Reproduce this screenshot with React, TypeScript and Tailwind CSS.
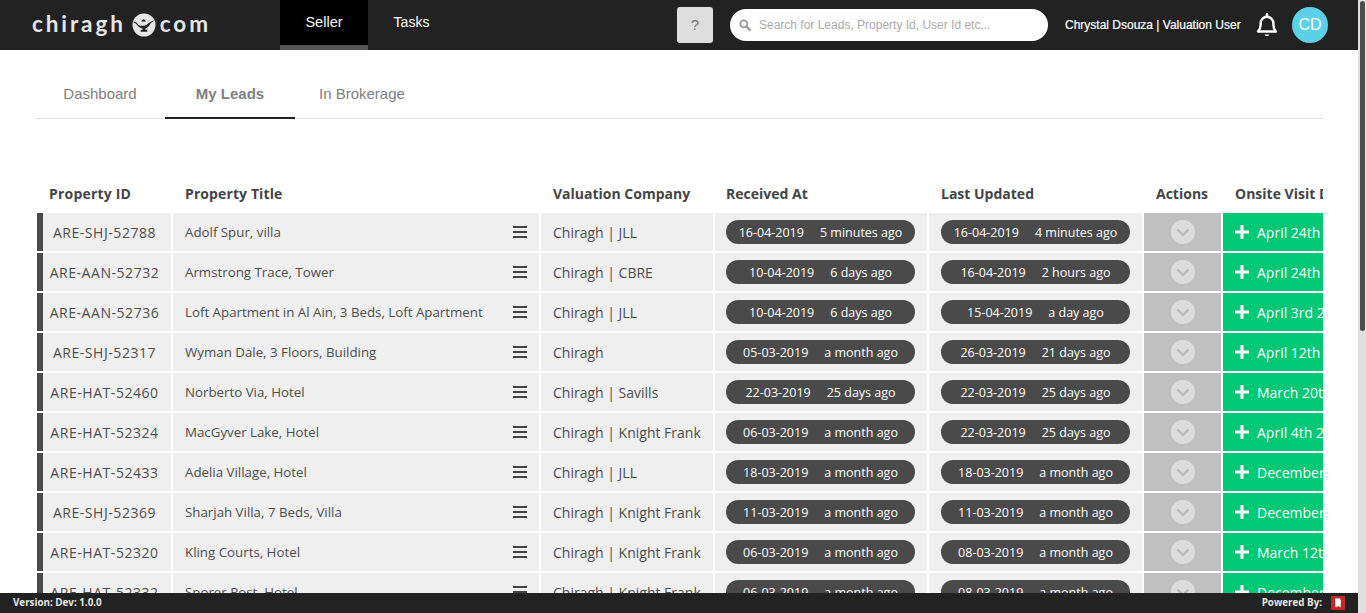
import React from "react";

const rows = [
  ["ARE-SHJ-52788", "Adolf Spur, villa", "Chiragh | JLL", "16-04-2019", "5 minutes ago", "16-04-2019", "4 minutes ago", "April 24th 2019"],
  ["ARE-AAN-52732", "Armstrong Trace, Tower", "Chiragh | CBRE", "10-04-2019", "6 days ago", "16-04-2019", "2 hours ago", "April 24th 2019"],
  ["ARE-AAN-52736", "Loft Apartment in Al Ain, 3 Beds, Loft Apartment", "Chiragh | JLL", "10-04-2019", "6 days ago", "15-04-2019", "a day ago", "April 3rd 2019"],
  ["ARE-SHJ-52317", "Wyman Dale, 3 Floors, Building", "Chiragh", "05-03-2019", "a month ago", "26-03-2019", "21 days ago", "April 12th 2019"],
  ["ARE-HAT-52460", "Norberto Via, Hotel", "Chiragh | Savills", "22-03-2019", "25 days ago", "22-03-2019", "25 days ago", "March 20th 2019"],
  ["ARE-HAT-52324", "MacGyver Lake, Hotel", "Chiragh | Knight Frank", "06-03-2019", "a month ago", "22-03-2019", "25 days ago", "April 4th 2019"],
  ["ARE-HAT-52433", "Adelia Village, Hotel", "Chiragh | JLL", "18-03-2019", "a month ago", "18-03-2019", "a month ago", "December 2018"],
  ["ARE-SHJ-52369", "Sharjah Villa, 7 Beds, Villa", "Chiragh | Knight Frank", "11-03-2019", "a month ago", "11-03-2019", "a month ago", "December 2018"],
  ["ARE-HAT-52320", "Kling Courts, Hotel", "Chiragh | Knight Frank", "06-03-2019", "a month ago", "08-03-2019", "a month ago", "March 12th 2019"],
  ["ARE-HAT-52332", "Sporer Post, Hotel", "Chiragh | Knight Frank", "06-03-2019", "a month ago", "08-03-2019", "a month ago", "December 2018"],
];

function Pill({ date, ago }: { date: string; ago: string }) {
  return (
    <div className="flex h-6 w-[189px] items-center justify-center gap-[16px] rounded-xl bg-[#4a4a4a] pt-[2px] text-[12.5px] text-white">
      <span>{date}</span>
      <span>{ago}</span>
    </div>
  );
}

function Lamp() {
  return (
    <svg width="24" height="24" viewBox="0 0 24 24" className="ml-[6px] mr-[4px] shrink-0">
      <circle cx="12" cy="12" r="11.5" fill="#e6e6e6" />
      <path d="M1.5 8.5c2 .2 3.2 1 4.2 2.400.8 1.200 2 1.800 3.400 1.900h3.400c1.600-.2 3.200-1.800 5-3.200 1.400-.9 3-1.600 5.200-2-1.800 1-3.300 1.800-4.200 3.200-1.300 2.200-3.200 4.200-5.200 4.800v1.200h2v2H8.700v-2h2v-1.200c-2.400-.5-4.200-1.700-5.600-3.600-.9-1.200-2-2-3.600-2.500z" fill="#222" />
      <path d="M9 8.600c.8-1.400 1.600-2 2.600-2.300.9.300 1.700.9 2.500 2.300z" fill="#222" />
    </svg>
  );
}

export default function App() {
  const th = "px-0 text-left align-middle font-bold";
  return (
    <div className="flex h-[613px] w-full overflow-hidden bg-white font-['Open_Sans',sans-serif]">
      <div className="flex h-full min-w-0 flex-1 flex-col">
        <header className="flex h-[50px] shrink-0 items-stretch bg-[#222222] font-['Liberation_Sans',Arial,sans-serif] text-white">
          <div className="flex w-[280px] shrink-0 items-center pb-[1px] pl-[32px] font-['Lato',sans-serif] text-[22.5px] font-bold leading-none tracking-[2.9px] text-[#e6e6e6]">
            <span>chiragh</span>
            <Lamp />
            <span>com</span>
          </div>
          <div className="flex h-full w-[88px] items-center justify-center border-b-[5px] border-[#555555] bg-black text-[14.5px]">
            Seller
          </div>
          <div className="flex h-full w-[88px] items-center justify-center pb-[5px] pr-[1px] text-[14px]">Tasks</div>
          <div className="ml-[221px] mt-[7px] flex h-9 w-9 items-center justify-center rounded-[3px] bg-[#dddddd] text-[15px] text-[#777777]">
            ?
          </div>
          <div className="ml-[17px] mt-[9px] flex h-8 w-[318px] items-center rounded-2xl bg-white pl-[9px] text-[12px] text-[#aaaaaa]">
            <svg width="12" height="12" viewBox="0 0 12 12" className="mr-[8px] shrink-0" fill="none" stroke="#999999">
              <circle cx="4.8" cy="4.8" r="3.5" strokeWidth="1.8" />
              <path d="M7.4 7.4 11 11" strokeWidth="2.2" strokeLinecap="round" />
            </svg>
            <span>Search for Leads, Property Id, User Id etc...</span>
          </div>
          <div className="ml-[17px] flex w-[176px] items-center whitespace-nowrap pb-[1px] text-[12px] [-webkit-text-stroke:0.2px_white]">
            Chrystal Dsouza | Valuation User
          </div>
          <div className="ml-[15px] flex items-center">
            <svg width="22" height="24" viewBox="0 0 22 24" fill="none" stroke="white" strokeWidth="2.4" strokeLinejoin="round">
              <path d="M2 18.500h18c-2-2-2.600-3.600-2.600-6.500V10.500c0-3.700-2.800-6.700-6.400-6.700S4.600 6.800 4.600 10.500V12c0 2.900-.6 4.500-2.600 6.500z" />
              <path d="M11 1.200v2.600" strokeLinecap="round" />
              <path d="M8.600 21.500c.5 1 1.300 1.500 2.400 1.500s1.900-.5 2.400-1.500z" fill="white" stroke="none" />
            </svg>
          </div>
          <div className="ml-[14px] mt-[7px] flex h-9 w-9 items-center justify-center rounded-full bg-[#5bd0e6] text-[16px] text-white">
            CD
          </div>
        </header>

        <main className="min-h-0 flex-1 overflow-hidden px-[35px]">
          <nav className="mt-[24px] flex h-[45px] border-b border-[#e0e0e0] font-['Liberation_Sans',Arial,sans-serif] text-[15px] text-[#808080]">
            <div className="flex w-[130px] items-center justify-center pb-[3px]">Dashboard</div>
            <div className="flex h-[45px] w-[130px] items-center justify-center border-b-2 border-[#222222] pb-[3px] font-bold">
              My Leads
            </div>
            <div className="flex items-center pb-[3px] pl-[24px]">In Brokerage</div>
          </nav>

          <div className="mt-[54px] overflow-hidden">
            <table className="w-[1370px] table-fixed border-separate border-spacing-[2px] whitespace-nowrap text-[14px] text-[#4d4d4d]">
              <colgroup>
                <col className="w-[134px]" />
                <col className="w-[366px]" />
                <col className="w-[172px]" />
                <col className="w-[212px]" />
                <col className="w-[213px]" />
                <col className="w-[77px]" />
                <col className="w-[180px]" />
              </colgroup>
              <thead>
                <tr className="h-9 text-[#444444]">
                  <th className={`${th} pl-3 tracking-[0.2px]`}>Property ID</th>
                  <th className={`${th} pl-3 tracking-[0.1px]`}>Property Title</th>
                  <th className={`${th} pl-3`}>Valuation Company</th>
                  <th className={`${th} pl-[11px]`}>Received At</th>
                  <th className={`${th} pl-3`}>Last Updated</th>
                  <th className={`${th} pl-3`}>Actions</th>
                  <th className={`${th} pl-3`}>Onsite Visit Date</th>
                </tr>
              </thead>
              <tbody>
                {rows.map((r) => (
                  <tr key={r[0]} className="h-[38px]">
                    <td className="border-l-[6px] border-[#4a4a4a] bg-[#efefef] p-0 pr-[5px] text-center tracking-[0.55px]">{r[0]}</td>
                    <td className="bg-[#efefef] p-0 pl-3 pr-3 text-[13.3px]">
                      <div className="flex items-center justify-between">
                        <span className="pt-[1px]">{r[1]}</span>
                        <svg width="14" height="12" viewBox="0 0 14 12" fill="#444444">
                          <rect y="0" width="14" height="2" />
                          <rect y="5" width="14" height="2" />
                          <rect y="10" width="14" height="2" />
                        </svg>
                      </div>
                    </td>
                    <td className="bg-[#efefef] p-0 pl-3">{r[2]}</td>
                    <td className="bg-[#efefef] p-0 pl-[11px]">
                      <Pill date={r[3]} ago={r[4]} />
                    </td>
                    <td className="bg-[#efefef] p-0 pl-3">
                      <Pill date={r[5]} ago={r[6]} />
                    </td>
                    <td className="bg-[#c0c0c0] p-0">
                      <div className="mx-auto flex h-6 w-6 items-center justify-center rounded-full bg-[#dcdcdc]">
                        <svg width="14" height="9" viewBox="0 0 14 9" fill="none" stroke="#bbbbbb" strokeWidth="2.4">
                          <path d="M1.5 1.5 7 7l5.500-5.500" />
                        </svg>
                      </div>
                    </td>
                    <td className="bg-[#00c875] p-0 pl-3 text-white">
                      <div className="flex items-center gap-[8px]">
                        <svg width="14" height="14" viewBox="0 0 14 14" fill="white" className="shrink-0">
                          <rect x="5.5" y="0" width="3" height="14" />
                          <rect x="0" y="5.5" width="14" height="3" />
                        </svg>
                        <span>{r[7]}</span>
                      </div>
                    </td>
                  </tr>
                ))}
              </tbody>
            </table>
          </div>
        </main>

        <footer className="flex h-5 shrink-0 items-center justify-between bg-[#222222] pl-[13px] pr-[13px] text-[9.8px] font-bold text-[#e6e6e6]">
          <span>Version: Dev: 1.0.0</span>
          <div className="flex items-center gap-[9px]">
            <span>Powered By:</span>
            <svg width="14" height="14" viewBox="0 0 14 14">
              <rect width="14" height="14" fill="#c1272d" />
              <path d="M4 2.500h5l1 3-.5 6-2-1.500-3 1.500z" fill="white" />
            </svg>
          </div>
        </footer>
      </div>
      <div className="h-full w-2 shrink-0 bg-[#e0e0e0] pl-[2px] pr-[1px] pt-[1px]">
        <div className="h-[330px] rounded-sm bg-[#4d4d4d]" />
      </div>
    </div>
  );
}
